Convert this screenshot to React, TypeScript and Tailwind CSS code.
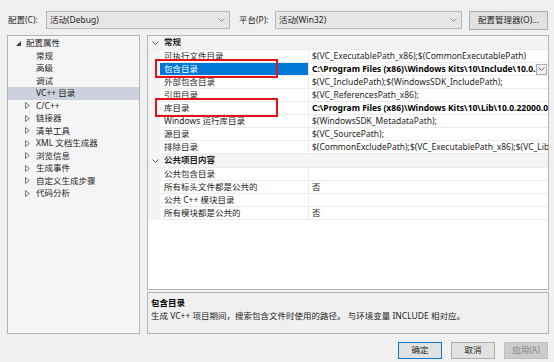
import type { ReactElement } from "react";

// --- Data ---

type TreeItem = { label: string; level: 0 | 1; kind: "open" | "closed" | "leaf"; selected?: boolean };

const TREE: TreeItem[] = [
  { label: "配置属性", level: 0, kind: "open" },
  { label: "常规", level: 1, kind: "leaf" },
  { label: "高级", level: 1, kind: "leaf" },
  { label: "调试", level: 1, kind: "leaf" },
  { label: "VC++ 目录", level: 1, kind: "leaf", selected: true },
  { label: "C/C++", level: 1, kind: "closed" },
  { label: "链接器", level: 1, kind: "closed" },
  { label: "清单工具", level: 1, kind: "closed" },
  { label: "XML 文档生成器", level: 1, kind: "closed" },
  { label: "浏览信息", level: 1, kind: "closed" },
  { label: "生成事件", level: 1, kind: "closed" },
  { label: "自定义生成步骤", level: 1, kind: "closed" },
  { label: "代码分析", level: 1, kind: "closed" },
];

type GridRow =
  | { cat: true; label: string }
  | { cat?: false; label: string; value: string; bold?: boolean; selected?: boolean };

const ROWS: GridRow[] = [
  { cat: true, label: "常规" },
  { label: "可执行文件目录", value: "$(VC_ExecutablePath_x86);$(CommonExecutablePath)" },
  {
    label: "包含目录",
    value: "C:\\Program Files (x86)\\Windows Kits\\10\\Include\\10.0.22000.0\\ucrt;$(IncludePath)",
    bold: true,
    selected: true,
  },
  { label: "外部包含目录", value: "$(VC_IncludePath);$(WindowsSDK_IncludePath);" },
  { label: "引用目录", value: "$(VC_ReferencesPath_x86);" },
  {
    label: "库目录",
    value: "C:\\Program Files (x86)\\Windows Kits\\10\\Lib\\10.0.22000.0\\ucrt\\x86;$(LibraryPath)",
    bold: true,
  },
  { label: "Windows 运行库目录", value: "$(WindowsSDK_MetadataPath);" },
  { label: "源目录", value: "$(VC_SourcePath);" },
  { label: "排除目录", value: "$(CommonExcludePath);$(VC_ExecutablePath_x86);$(VC_LibraryPath_x86)" },
  { cat: true, label: "公共项目内容" },
  { label: "公共包含目录", value: "" },
  { label: "所有标头文件都是公共的", value: "否" },
  { label: "公共 C++ 模块目录", value: "" },
  { label: "所有模块都是公共的", value: "否" },
];

// --- Small drawings ---

function Chevron({ className }: { className?: string }): ReactElement {
  return (
    <svg width="7" height="4" viewBox="0 0 7 4" className={className}>
      <polyline points="0.5,0.5 3.5,3.5 6.5,0.5" fill="none" stroke="currentColor" strokeWidth="1" />
    </svg>
  );
}

function TreeArrow({ kind }: { kind: TreeItem["kind"] }): ReactElement | null {
  if (kind === "open")
    return (
      <svg width="5" height="5" viewBox="0 0 5 5">
        <polygon points="5,0 5,5 0,5" fill="#404040" />
      </svg>
    );
  if (kind === "closed")
    return (
      <svg width="5" height="7" viewBox="0 0 5 7">
        <polygon points="0.5,0.5 4.3,3.5 0.5,6.5" fill="none" stroke="#6a6a6a" strokeWidth="0.9" />
      </svg>
    );
  return null;
}

function Combo({ text, width }: { text: string; width: string }): ReactElement {
  return (
    <div
      className={`${width} flex h-[18px] items-center justify-between border border-[#b9b9b9] bg-[#e6e6e6] pl-[3px] pr-[4px]`}
    >
      <span>{text}</span>
      <Chevron className="text-[#8a8a8a]" />
    </div>
  );
}

// --- Panels ---

function Tree(): ReactElement {
  return (
    <div className="ml-[7px] h-[299px] w-[133px] border border-[#b4b4b4] bg-[#f5f5f5] pt-[1px]">
      {TREE.map((t) => (
        <div
          key={t.label}
          className={`flex h-[12.5px] items-center ${t.selected ? "bg-[#cdd0dd]" : ""}`}
        >
          <div className={`flex w-[14px] justify-center ${t.level === 0 ? "ml-[3px]" : "ml-[12px]"}`}>
            <TreeArrow kind={t.kind} />
          </div>
          <span className={t.level === 0 ? "ml-[1px]" : "ml-[2px]"}>{t.label}</span>
        </div>
      ))}
    </div>
  );
}

function PropertyGrid(): ReactElement {
  return (
    <div className="relative h-[255px] overflow-hidden border border-[#b4b4b4] bg-white">
      {ROWS.map((r) =>
        r.cat ? (
          <div key={r.label} className="flex h-[14px] items-center border-b border-[#ececec] bg-[#f4f4f4]">
            <div className="flex w-[12px] justify-center pl-[2px]">
              <Chevron className="text-[#555]" />
            </div>
            <span className="pl-[4px] font-bold">{r.label}</span>
          </div>
        ) : (
          <div key={r.label} className="flex h-[13px] items-stretch">
            <div className="w-[12px] bg-[#f4f4f4]" />
            <div
              className={`flex w-[149px] items-center border-b border-r border-[#ececec] pl-[4px] ${
                r.selected ? "bg-[#0078d7] text-white" : ""
              }`}
            >
              {r.label}
            </div>
            <div className="flex min-w-0 flex-1 items-center border-b border-[#ececec] pl-[3px]">
              <span
                className={`min-w-0 flex-1 overflow-hidden whitespace-nowrap leading-[12px] ${
                  r.bold ? "font-bold text-black" : ""
                }`}
              >
                {r.value}
              </span>
              {r.selected && (
                <div className="mr-[1px] flex h-[11px] w-[11px] shrink-0 items-center justify-center border border-[#adadad] bg-[#f0f0f0]">
                  <Chevron className="text-[#666]" />
                </div>
              )}
            </div>
          </div>
        ),
      )}

      {/* red annotation boxes */}
      <div className="absolute left-[7px] top-[23px] h-[19px] w-[123px] border-2 border-[#e5121b]" />
      <div className="absolute left-[7px] top-[62px] h-[19px] w-[123px] border-2 border-[#e5121b]" />
    </div>
  );
}

function Description(): ReactElement {
  return (
    <div className="mt-[2px] h-[42px] border border-[#b4b4b4] bg-[#f0f0f0] pl-[3px] pt-[3px]">
      <div className="font-bold leading-[13px] text-black">包含目录</div>
      <div className="leading-[13px]">生成 VC++ 项目期间，搜索包含文件时使用的路径。 与环境变量 INCLUDE 相对应。</div>
    </div>
  );
}

function Button({ label, kind }: { label: string; kind: "default" | "normal" | "disabled" }): ReactElement {
  const cls =
    kind === "default"
      ? "border-[#0078d7] bg-[#e1e1e1] text-[#1e1e1e]"
      : kind === "normal"
        ? "border-[#adadad] bg-[#e1e1e1] text-[#1e1e1e]"
        : "border-[#bfbfbf] bg-[#cccccc] text-[#838383]";
  return <div className={`flex h-[17px] w-[44px] items-center justify-center border ${cls}`}>{label}</div>;
}

// --- Main ---

export default function App(): ReactElement {
  return (
    <div className="h-[362px] w-[554px] overflow-hidden bg-[#f0f0f0] font-['Noto_Sans','Noto_Sans_CJK_SC',sans-serif] text-[8.5px] leading-none text-[#1e1e1e]">
      <div className="mt-[11px] flex h-[18px] items-center pl-[8px]">
        <span className="w-[38px]">配置(C):</span>
        <Combo text="活动(Debug)" width="w-[184px]" />
        <span className="ml-[9px] w-[36px]">平台(P):</span>
        <Combo text="活动(Win32)" width="w-[187px]" />
        <div className="ml-[7px] flex h-[19px] w-[79px] items-center justify-center border border-[#adadad] bg-[#e1e1e1]">
          配置管理器(O)...
        </div>
      </div>

      <div className="mt-[6px] flex">
        <Tree />
        <div className="ml-[7px] w-[402px]">
          <PropertyGrid />
          <Description />
        </div>
      </div>

      <div className="mt-[8px] flex justify-end gap-[9px] pr-[6px]">
        <Button label="确定" kind="default" />
        <Button label="取消" kind="normal" />
        <Button label="应用(A)" kind="disabled" />
      </div>
    </div>
  );
}
